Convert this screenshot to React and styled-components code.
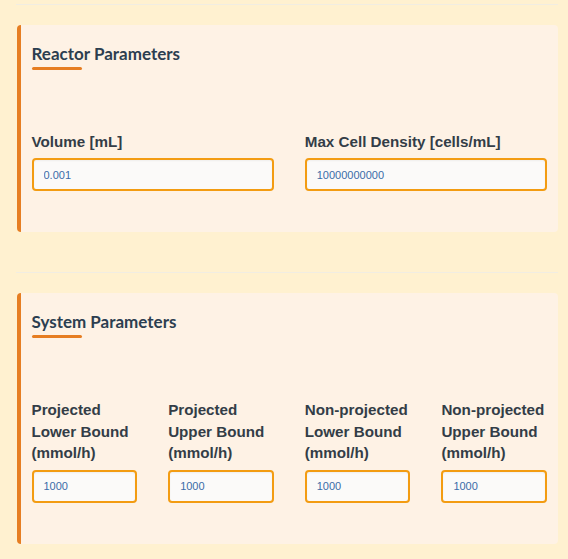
import React from "react";
import styled, { createGlobalStyle } from "styled-components";

const Global = createGlobalStyle`
  html, body {
    margin: 0;
    padding: 0;
    background: #fff1d0;
    font-family: "Liberation Sans", Arial, sans-serif;
  }
`;

const Page = styled.div`
  padding: 4px 10px 16px 16px;
`;

const Rule = styled.hr`
  margin: 0;
  border: 0;
  border-top: 1px solid #f1ede2;
`;

const Card = styled.section`
  margin: 20px 0 40px 1px;
  background: #fef2e5;
  border-left: 4px solid #e67e22;
  border-radius: 4px;
  padding: 17px 11px 41px 10.5px;
  &:last-child {
    margin-bottom: 0;
  }
`;

const Title = styled.h3`
  margin: 0;
  font-family: Lato, "Open Sans", sans-serif;
  font-weight: 700;
  font-size: 17px;
  line-height: 24px;
  color: #2c3e50;
`;

const Underline = styled.div`
  margin-top: 1px;
  width: 50px;
  height: 3px;
  border-radius: 2px;
  background: #e67e22;
`;

const Grid = styled.div`
  display: grid;
  grid-template-columns: repeat(${(p) => p.$cols}, 1fr);
  column-gap: 31px;
  margin-top: 61px;
  align-items: end;
`;

const Field = styled.div`
  display: flex;
  flex-direction: column;
`;

const Label = styled.label`
  font-weight: 700;
  font-size: 15.2px;
  line-height: 21.4px;
  color: #333d47;
  margin-bottom: 6px;
`;

const Input = styled.input`
  box-sizing: border-box;
  width: 100%;
  height: 33px;
  border: 2px solid #f39c12;
  border-radius: 4px;
  background: #fbfaf9;
  padding: 0 10px;
  font-family: "Liberation Sans", Arial, sans-serif;
  font-size: 11px;
  color: #3a6ca8;
  outline: none;
  box-shadow: inset 0 1px 2px rgba(0, 0, 0, 0.05);
`;

const reactor = [
  { label: "Volume [mL]", value: "0.001" },
  { label: "Max Cell Density [cells/mL]", value: "10000000000" },
];

const system = [
  { label: "Projected Lower Bound (mmol/h)", value: "1000" },
  { label: "Projected Upper Bound (mmol/h)", value: "1000" },
  { label: "Non-projected Lower Bound (mmol/h)", value: "1000" },
  { label: "Non-projected Upper Bound (mmol/h)", value: "1000" },
];

function Section({ title, fields }) {
  return (
    <Card>
      <Title>{title}</Title>
      <Underline />
      <Grid $cols={fields.length}>
        {fields.map((f) => (
          <Field key={f.label}>
            <Label>{f.label}</Label>
            <Input type="text" defaultValue={f.value} />
          </Field>
        ))}
      </Grid>
    </Card>
  );
}

export default function App() {
  return (
    <Page>
      <Global />
      <Rule />
      <Section title="Reactor Parameters" fields={reactor} />
      <Rule />
      <Section title="System Parameters" fields={system} />
    </Page>
  );
}
